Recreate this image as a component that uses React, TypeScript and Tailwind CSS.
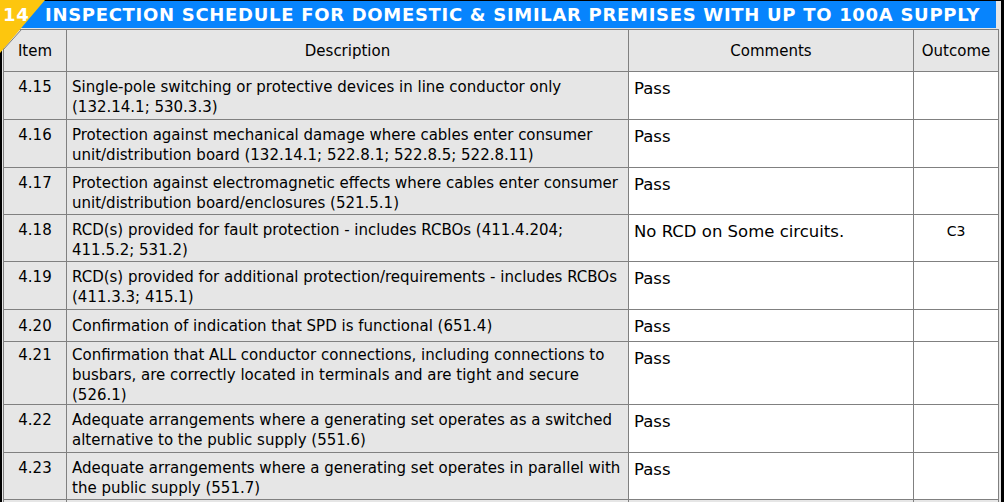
import React from "react";

const rows: { item: string; desc: string; comment: string; outcome: string; pt: string }[] = [
  { item: "4.15", desc: "Single-pole switching or protective devices in line conductor only (132.14.1; 530.3.3)", comment: "Pass", outcome: "", pt: "pt-[5px]" },
  { item: "4.16", desc: "Protection against mechanical damage where cables enter consumer unit/distribution board (132.14.1; 522.8.1; 522.8.5; 522.8.11)", comment: "Pass", outcome: "", pt: "pt-[5px]" },
  { item: "4.17", desc: "Protection against electromagnetic effects where cables enter consumer unit/distribution board/enclosures (521.5.1)", comment: "Pass", outcome: "", pt: "pt-[5px]" },
  { item: "4.18", desc: "RCD(s) provided for fault protection - includes RCBOs (411.4.204; 411.5.2; 531.2)", comment: "No RCD on Some circuits.", outcome: "C3", pt: "pt-[5px]" },
  { item: "4.19", desc: "RCD(s) provided for additional protection/requirements - includes RCBOs (411.3.3; 415.1)", comment: "Pass", outcome: "", pt: "pt-[5px]" },
  { item: "4.20", desc: "Confirmation of indication that SPD is functional (651.4)", comment: "Pass", outcome: "", pt: "pt-[6px]" },
  { item: "4.21", desc: "Confirmation that ALL conductor connections, including connections to busbars, are correctly located in terminals and are tight and secure (526.1)", comment: "Pass", outcome: "", pt: "pt-[3px]" },
  { item: "4.22", desc: "Adequate arrangements where a generating set operates as a switched alternative to the public supply (551.6)", comment: "Pass", outcome: "", pt: "pt-[5px]" },
  { item: "4.23", desc: "Adequate arrangements where a generating set operates in parallel with the public supply (551.7)", comment: "Pass", outcome: "", pt: "pt-[5px]" },
];

export default function App() {
  return (
    <div className="relative w-[1004px] h-[502px] overflow-hidden bg-black pl-[2px] pr-[3px] pt-px font-['DejaVu_Sans',Verdana,sans-serif] text-black">
      <div className="h-full bg-[#e6e6e6]">
        <div className="h-[27px] mr-[5px] bg-[#0784fd] flex items-center pl-[43px] text-white font-bold text-[18px] tracking-[0.7px] leading-none whitespace-nowrap">
          INSPECTION SCHEDULE FOR DOMESTIC &amp; SIMILAR PREMISES WITH UP TO 100A SUPPLY
        </div>
        <div className="h-px" />
        <div className="ml-px w-[996px] grid grid-cols-[62px_561px_284px_84px] grid-rows-[41px_47px_47px_46px_46px_47px_31px_62px_47px_46px_20px] gap-px border border-[#808080] bg-[#808080] text-[15px] leading-[20px]">
          <div className="bg-[#e6e6e6] flex items-center justify-center">Item</div>
          <div className="bg-[#e6e6e6] flex items-center justify-center">Description</div>
          <div className="bg-[#e6e6e6] flex items-center justify-center">Comments</div>
          <div className="bg-[#e6e6e6] flex items-center justify-center">Outcome</div>
          {rows.map((r) => (
            <React.Fragment key={r.item}>
              <div className={`bg-[#e6e6e6] text-center ${r.pt}`}>{r.item}</div>
              <div className={`bg-[#e6e6e6] pl-[5px] pr-[4px] ${r.pt}`}>{r.desc}</div>
              <div className="bg-white pl-[5px] pt-[7px] text-[16.5px] leading-[20px]">{r.comment}</div>
              <div className="bg-white pt-[6px] text-center text-[14px] leading-[20px]">{r.outcome}</div>
            </React.Fragment>
          ))}
          <div className="bg-[#e6e6e6]" />
          <div className="bg-[#e6e6e6]" />
          <div className="bg-[#e6e6e6]" />
          <div className="bg-[#e6e6e6]" />
        </div>
      </div>
      <svg className="absolute left-0 top-0" width="50" height="56" viewBox="0 0 50 56">
        <polygon points="0,0 45,0 0,53" fill="#fdc60e" />
        <line x1="21.5" y1="29.5" x2="3" y2="50" stroke="#808080" strokeWidth="1" />
      </svg>
      <div className="absolute left-[3px] top-px h-[27px] flex items-center text-white font-bold text-[18px] tracking-[0.7px] leading-none">
        14
      </div>
    </div>
  );
}
